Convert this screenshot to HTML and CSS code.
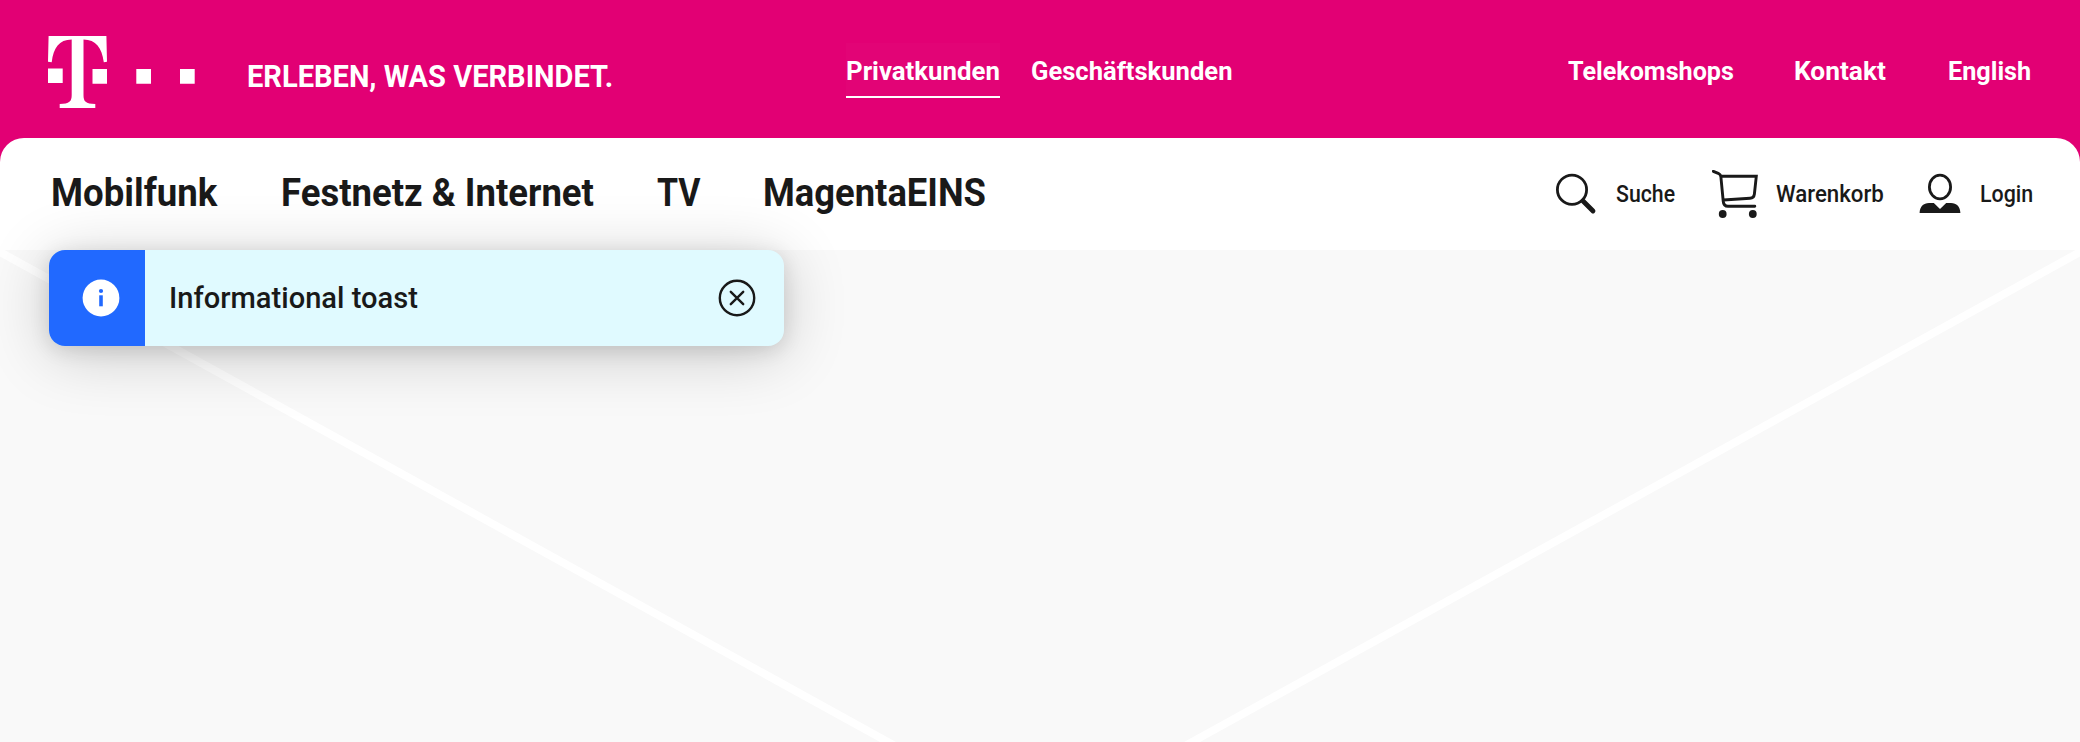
FILE: index.html
```html
<!DOCTYPE html>
<html lang="de">
<head>
<meta charset="utf-8">
<title>Telekom</title>
<link rel="stylesheet" href="styles.css">
</head>
<body>
<header class="brand-bar">
  <svg class="logo" width="148" height="74" viewBox="0 0 148 74" fill="#fff">
    <path d="M0.6 0H58.4L59 25.8L55.8 26.2C53.8 11.5 48 3.8 35.5 3.5V59C35.5 65.5 37.5 67.8 47.3 68V72H11.7V68C21.5 67.8 23.7 65.5 23.7 59V3.5C11 3.8 5.6 11.5 3.7 26.2L0 25.8Z"/>
    <path d="M0 32.5H14.7V47H0ZM44.5 33H59V47.7H44.5ZM88.3 33H103V47.7H88.3ZM132 33H146.7V47.7H132Z"/>
  </svg>
  <span class="slogan"><span class="t">ERLEBEN, WAS VERBINDET.</span></span>
  <nav class="segments">
    <a class="segment segment-active"><span class="t">Privatkunden</span></a>
    <a class="segment segment-business"><span class="t">Geschäftskunden</span></a>
  </nav>
  <nav class="meta">
    <a class="meta-shops"><span class="t">Telekomshops</span></a>
    <a class="meta-contact"><span class="t">Kontakt</span></a>
    <a class="meta-lang"><span class="t">English</span></a>
  </nav>
</header>
<div class="main-bar">
  <nav class="main-nav">
    <a class="nav-mobile"><span class="t">Mobilfunk</span></a>
    <a class="nav-home"><span class="t">Festnetz &amp; Internet</span></a>
    <a class="nav-tv"><span class="t">TV</span></a>
    <a class="nav-eins"><span class="t">MagentaEINS</span></a>
  </nav>
  <div class="tools">
    <a class="tool tool-search">
      <svg width="48" height="48" viewBox="0 0 48 48" fill="none" stroke="#191919" stroke-linecap="round"><circle cx="20" cy="19.7" r="14.6" stroke-width="2.8"/><path d="M31 31L41 41" stroke-width="4.8"/></svg>
      <span class="t">Suche</span>
    </a>
    <a class="tool tool-cart">
      <svg width="48" height="48" viewBox="0 0 48 48" fill="none" stroke="#191919" stroke-width="2.9" stroke-linecap="round"><path d="M1.3 1.3L6.2 3.3Q8.7 4.5 8.9 7L11.2 31Q11.6 36.3 16 36.3H42.8M9 6.3H44.3L42.4 24Q41.9 28 38 28.3L11.5 30"/><circle cx="10.7" cy="44" r="3.9" fill="#191919" stroke="none"/><circle cx="40.8" cy="44" r="3.9" fill="#191919" stroke="none"/></svg>
      <span class="t">Warenkorb</span>
    </a>
    <a class="tool tool-login">
      <svg width="48" height="48" viewBox="0 0 48 48"><ellipse cx="24" cy="17" rx="10.6" ry="11.8" fill="none" stroke="#191919" stroke-width="2.8"/><path d="M3.6 43C3.8 36.5 7.5 33 13 33H17.8L24 39L30.2 33H35C40.5 33 44.2 36.5 44.4 43Z" fill="#191919"/></svg>
      <span class="t">Login</span>
    </a>
  </div>
</div>
<main class="stage">
  <svg class="stage-lines" width="2080" height="492" viewBox="0 0 2080 492" fill="#fff"><path d="M0 -2.5L896 492H880L0 6.5ZM2080 -2.5L1184 492H1200L2080 6.5Z"/></svg>
  <div class="toast" role="status">
    <div class="toast-badge">
      <svg width="38" height="38" viewBox="0 0 38 38"><circle cx="19" cy="19" r="18.4" fill="#fff"/><circle cx="19" cy="12" r="2.1" fill="#2169ff"/><path d="M17.2 16.3H20.8V27.3H17.2Z" fill="#2169ff"/></svg>
    </div>
    <p class="toast-text"><span class="t">Informational toast</span></p>
    <svg class="toast-close" width="38" height="38" viewBox="0 0 38 38" fill="none" stroke="#191919" stroke-width="2.4" stroke-linecap="round"><circle cx="19" cy="19" r="17.2"/><path d="M12.8 12.8L25.2 25.2M25.2 12.8L12.8 25.2"/></svg>
  </div>
</main>
</body>
</html>
```
FILE: styles.css
```css
* { box-sizing: border-box; }
body { margin: 0; width: 2080px; height: 742px; overflow: hidden; background: #e20074; color: #191919; font-family: Roboto, "Liberation Sans", sans-serif; }

/* Slightly condensed lettering, set per label */
.t { display: inline-block; white-space: nowrap; transform: scaleX(var(--condense, .96)); transform-origin: 0 50%; }

.brand-bar { display: flex; height: 138px; color: #fff; font-weight: 700; font-size: 26.7px; line-height: 32px; }
.logo { margin: 36px 0 0 48px; flex: none; }
.slogan { --condense: .937; margin: 58px 0 0 51px; width: 380px; font-size: 31px; line-height: 38px; }
.segments { display: flex; width: 722px; margin-left: 219px; gap: 31px; }
.segment { height: 55px; margin-top: 43px; padding-top: 12px; }
.segment-active { --condense: .967; width: 154px; background: rgba(255, 255, 255, .015); border-bottom: 2px solid #fff; }
.segment-business { --condense: .958; }
.meta { display: flex; margin-top: 55px; }
.meta-shops { --condense: .942; width: 226px; }
.meta-contact { --condense: .985; width: 154px; }
.meta-lang { --condense: .945; }

.main-bar { display: flex; height: 112px; background: #fff; border-radius: 24px 24px 0 0; }
.main-nav { display: flex; width: 1552px; padding: 32px 0 0 51px; font-weight: 700; font-size: 38px; line-height: 46px; }
.nav-mobile { --condense: .963; width: 230px; }
.nav-home { --condense: .961; width: 375.5px; }
.nav-tv { --condense: .895; width: 106.5px; }
.nav-eins { --condense: .957; }
.tools { display: flex; font-size: 23px; font-weight: 500; line-height: 28px; }
.tool { display: flex; padding-top: 32px; }
.tool svg { flex: none; }
.tool .t { margin: 11px 0 0 16px; }
.tool-search { --condense: .925; width: 160px; }
.tool-cart { --condense: .968; width: 204px; }
.tool-login { --condense: .93; }

.stage { position: relative; height: 492px; padding-left: 49px; background: #f9f9f9; }
.stage-lines { position: absolute; left: 0; top: 0; }
.toast { position: relative; display: flex; align-items: center; width: 735px; height: 96px; border-radius: 16px; background: #e0faff; box-shadow: 0 8px 64px rgba(0, 0, 0, .2), 0 4px 20px rgba(0, 0, 0, .12); }
.toast-badge { display: flex; align-items: center; width: 96px; height: 96px; padding-left: 33px; background: #2169ff; border-radius: 16px 0 0 16px; }
.toast-text { --condense: .97; flex: 1; margin: 0 0 0 23.5px; font-size: 30px; font-weight: 500; line-height: 36px; }
.toast-close { margin-right: 28px; }
```
